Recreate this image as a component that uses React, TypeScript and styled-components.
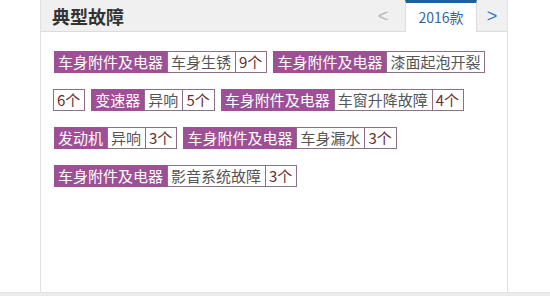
import React from 'react';
import styled, { createGlobalStyle } from 'styled-components';

const GlobalStyle = createGlobalStyle`
  html, body {
    margin: 0;
    padding: 0;
    background: #ffffff;
  }
  body {
    font-family: "Noto Sans CJK SC", "Liberation Sans", sans-serif;
  }
`;

const Page = styled.div`
  width: 550px;
  height: 296px;
  display: flex;
  flex-direction: column;
  overflow: hidden;
`;

const Panel = styled.div`
  margin-left: 40px;
  width: 466px;
  height: 293px;
  border-left: 1px solid #e2e2e2;
  border-right: 1px solid #e2e2e2;
  display: flex;
  flex-direction: column;
`;

const BottomStrip = styled.div`
  height: 3px;
  background: #ebebeb;
  border-top: 1px solid #e4e4e4;
`;

const Header = styled.div`
  height: 31px;
  background: #f0f0f0;
  border-bottom: 1px solid #dcdcdc;
  display: flex;
  align-items: stretch;
  justify-content: space-between;
  padding-left: 11px;
`;

const Title = styled.h3`
  margin: 0;
  font-size: 18px;
  font-weight: 700;
  color: #333;
  line-height: 33px;
`;

const Switcher = styled.div`
  display: flex;
  align-items: stretch;
`;

const Arrow = styled.span<{ active?: boolean }>`
  width: ${p => (p.active ? '30px' : '28px')};
  margin-right: ${p => (p.active ? '0' : '8px')};
  display: flex;
  align-items: center;
  justify-content: center;
  font-family: "Liberation Sans", sans-serif;
  font-size: 18px;
  color: ${p => (p.active ? '#3a78bd' : '#b4b4b4')};
  padding-top: 2px;
`;

const YearTab = styled.span`
  width: 70px;
  background: #fff;
  border-top: 3px solid #1d5fa3;
  border-left: 1px solid #dcdcdc;
  border-right: 1px solid #dcdcdc;
  margin-bottom: -1px;
  display: flex;
  align-items: center;
  justify-content: center;
  font-size: 14px;
  color: #2d68a6;
  padding-bottom: 2px;
`;

const Tags = styled.div`
  padding: 9px 10px 0 13px;
  line-height: 38px;
  font-size: 15px;
`;

const Seg = styled.span<{ kind: 'cat' | 'fault' | 'count' }>`
  display: inline-block;
  vertical-align: middle;
  height: 22px;
  box-sizing: border-box;
  line-height: ${p => (p.kind === 'cat' ? '22px' : '20px')};
  padding: ${p => (p.kind === 'cat' ? '0 4px' : '0 4px 0 3px')};
  background: ${p => (p.kind === 'cat' ? '#9e5096' : '#fff')};
  color: ${p => (p.kind === 'cat' ? '#fff' : p.kind === 'count' ? '#6b2c2c' : '#555')};
  border: ${p => (p.kind === 'cat' ? 'none' : '1px solid #8d6f88')};
  margin-left: ${p => (p.kind === 'count' ? '-1px' : '0')};
  margin-right: ${p => (p.kind === 'count' ? '6px' : '0')};
  white-space: nowrap;
`;

const faults = [
  { cat: '车身附件及电器', fault: '车身生锈', count: 9 },
  { cat: '车身附件及电器', fault: '漆面起泡开裂', count: 6 },
  { cat: '变速器', fault: '异响', count: 5 },
  { cat: '车身附件及电器', fault: '车窗升降故障', count: 4 },
  { cat: '发动机', fault: '异响', count: 3 },
  { cat: '车身附件及电器', fault: '车身漏水', count: 3 },
  { cat: '车身附件及电器', fault: '影音系统故障', count: 3 },
];

function App() {
  return (
    <Page>
      <GlobalStyle />
      <Panel>
        <Header>
          <Title>典型故障</Title>
          <Switcher>
            <Arrow>&lt;</Arrow>
            <YearTab>2016款</YearTab>
            <Arrow active>&gt;</Arrow>
          </Switcher>
        </Header>
        <Tags>
          {faults.map((f, i) => (
            <React.Fragment key={i}>
              <Seg kind="cat">{f.cat}</Seg>
              <Seg kind="fault">{f.fault}</Seg>
              <Seg kind="count">{f.count}个</Seg>
            </React.Fragment>
          ))}
        </Tags>
      </Panel>
      <BottomStrip />
    </Page>
  );
}

export default App;
